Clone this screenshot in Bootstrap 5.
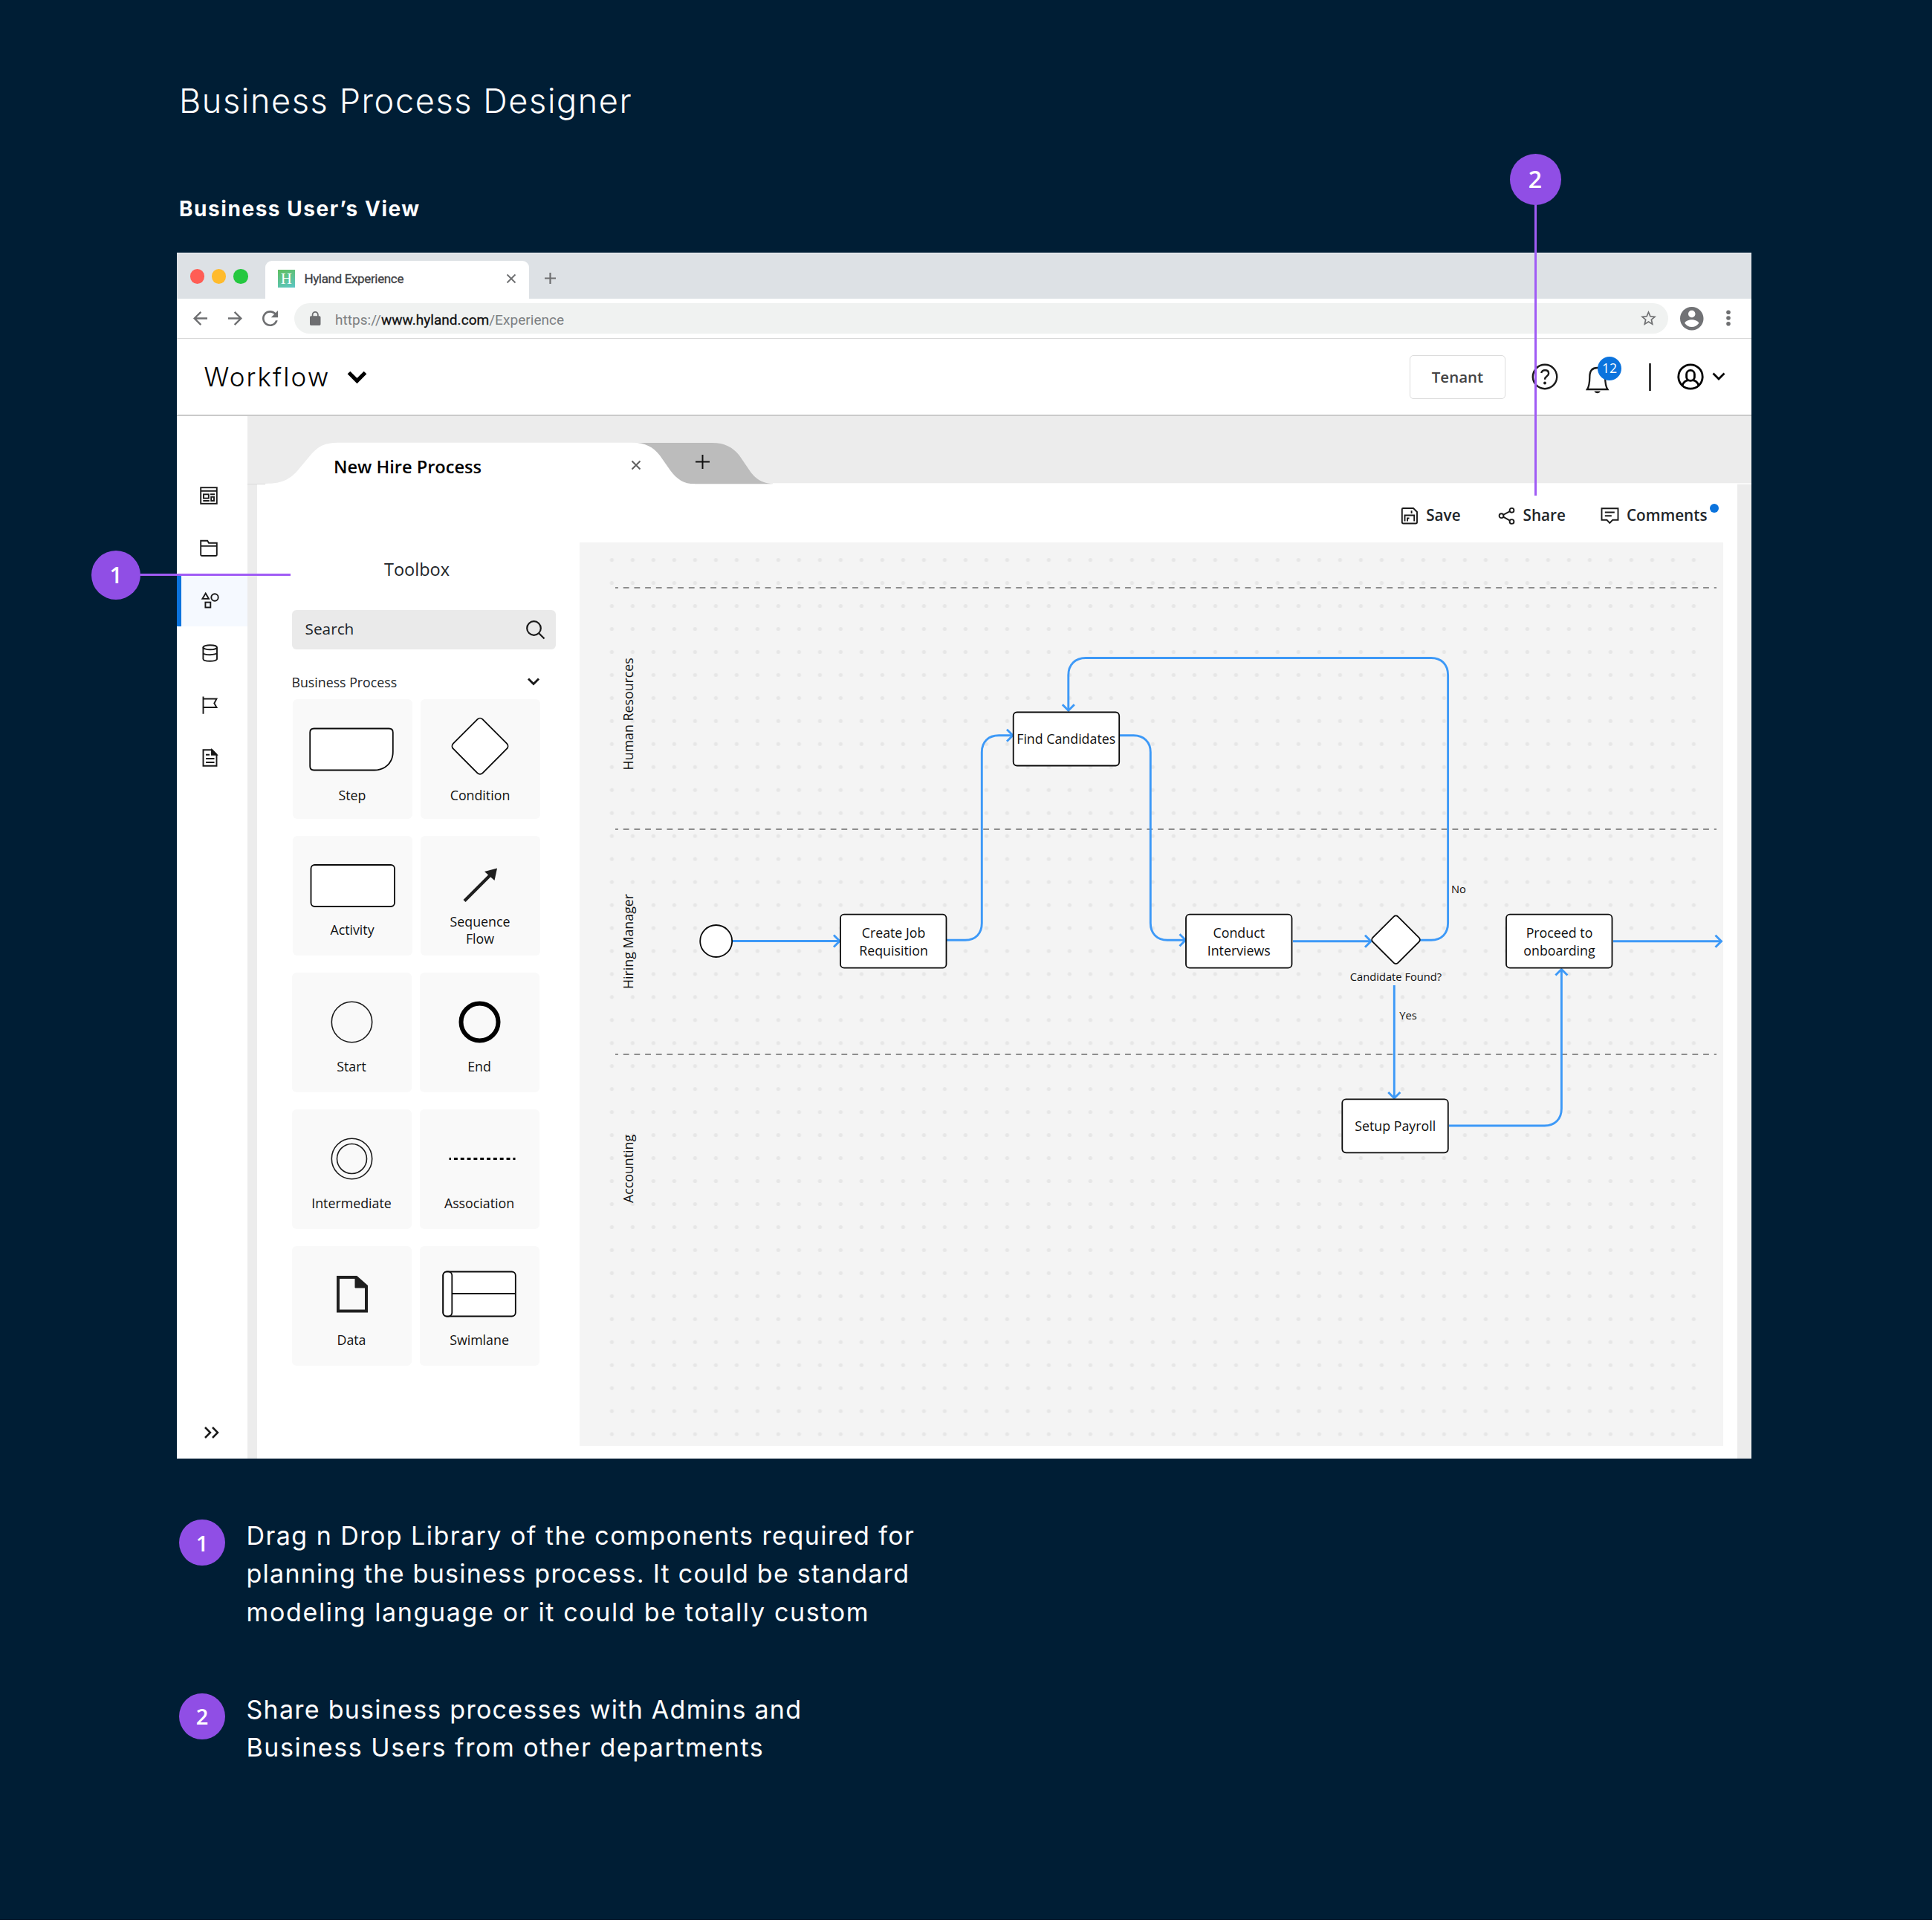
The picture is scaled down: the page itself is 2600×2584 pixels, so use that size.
<!DOCTYPE html>
<html lang="en">
<head>
<meta charset="utf-8">
<meta name="viewport" content="width=device-width, initial-scale=1">
<title>Business Process Designer</title>
<link href="https://cdn.jsdelivr.net/npm/bootstrap@5.3.0/dist/css/bootstrap.min.css" rel="stylesheet">
<style>
  body { background: #001e35; font-family: "Open Sans", sans-serif; color: #1a1a1a; }
  svg { display: block; flex: none; overflow: visible; }
  .board { width: 2600px; height: 2584px; padding: 106px 0 0 240px; border-bottom: 1px solid #000f22; overflow: hidden; }

  /* page headings and legend */
  .board-title { font: 300 45px/60px Inter, sans-serif; letter-spacing: 1.62px; margin: 0 0 95px 1px; }
  .board-subtitle { font: 700 28px/40px Inter, sans-serif; letter-spacing: 1.55px; margin: 0 0 38.5px 1px; }
  .pin { background: #904ee5; color: #fff; font-weight: 600; border-radius: 50%; display: flex; align-items: center; justify-content: center; flex: none; line-height: 1; }
  .pin-legend { width: 62px; height: 62px; font-size: 29px; margin: 4px 28.5px 0 1px; }
  .legend { padding-top: 78.5px; }
  .legend-row { margin-bottom: 80px; }
  .legend-text { font: 400 34px/51.3px Inter, sans-serif; margin: 0; }
  .legend-text span { display: block; }
  .t-1 { letter-spacing: 1.46px; } .t-2 { letter-spacing: 1.26px; } .t-3 { letter-spacing: 1.65px; } .t-4 { letter-spacing: 1.25px; } .t-5 { letter-spacing: 1.55px; }

  /* callouts over the window */
  .pin-a { left: 123px; top: 741px; width: 66px; height: 66px; font-size: 30px; }
  .pin-b { left: 2031.5px; top: 206.5px; width: 69px; height: 69px; font-size: 32px; }
  .wire { background: #a05cf5; }
  .wire-a { left: 188px; top: 771.5px; width: 202.5px; height: 3px; }
  .wire-b { left: 2064.6px; top: 274px; width: 3.4px; height: 393px; }

  /* browser frame */
  .browser { width: 2119.5px; height: 1623px; margin-left: -2.5px; background: #fff; }
  .tabstrip { height: 62.5px; background: #dde1e5; border-top: 1px solid #f1f2f5; padding-left: 18px; }
  .light { width: 19.5px; height: 19.5px; border-radius: 50%; margin: 21.5px 9.8px 0 0; }
  .browser-tab { width: 355px; height: 51px; background: #fff; border-radius: 9px 9px 0 0; padding: 0 18px 3px 17px; margin-left: 13.5px; font: 400 17px Roboto, sans-serif; letter-spacing: -.35px; color: #3f4144; -webkit-text-stroke: .3px; }
  .favicon { width: 23px; height: 24px; background: linear-gradient(160deg, #5fbf5f, #5cc6c6); color: #fff; font: 400 21px/24px "Liberation Serif", serif; text-align: center; letter-spacing: 0; margin-right: 12.5px; -webkit-text-stroke: 0; }
  .navstrip { height: 53.5px; border-bottom: 1.5px solid #d9d9d9; padding-left: 22px; color: #6e6f71; }
  .omnibox { width: 1849px; height: 41px; border-radius: 21px; background: #f0f2f1; padding: 0 16px 0 21px; font: 400 19px Roboto, sans-serif; letter-spacing: .04px; color: #7c7f82; }
  .omnibox b { font-weight: 400; color: #111; -webkit-text-stroke: .3px; }

  /* application header */
  .apphead { height: 104px; border-bottom: 2px solid #cacaca; padding: 1px 35.5px 0 37px; }
  .app-name { font: 300 35px/44px Inter, sans-serif; letter-spacing: 2.1px; color: #000; margin-right: 23px; }
  .btn-tenant { width: 129px; height: 59px; border: 1.5px solid #dcdcdc; border-radius: 5px; font-size: 20.5px; font-weight: 600; color: #444; padding: 0; }
  .count { left: 16px; top: -13px; width: 32px; height: 32px; background: #0b73dd; color: #fff; border-radius: 50%; font-size: 17.7px; line-height: 31px; text-align: center; }
  .vbar { width: 2.5px; height: 37px; background: #3a3a3a; }

  /* sidebar */
  .rail { width: 95px; padding: 73px 0 27px; background: #fff; }
  .rail-item { height: 69px; margin-bottom: 1.6px; padding-left: 31px; display: flex; align-items: center; }
  .rail-item.on { background: #f5f9ff; border-left: 6px solid #0b73dd; padding-left: 25px; }
  .work { background: #ececec; }

  /* document tabs and panel */
  .doctabs { height: 91px; }
  .doc-name { font-size: 23.6px; font-weight: 600; line-height: 30px; color: #000; margin: 53px 0 0 116.5px; width: 397px; }
  .panel { margin: 0 19.5px 0 13px; background: #fff; }
  .toolbox { width: 434px; padding: 100px 32px 0 47px; }
  .toolbox-title { font-size: 23.5px; line-height: 30px; margin: 0 0 40px 124.5px; font-weight: 400; }
  .searchbox { height: 53px; border-radius: 6px; background: #eaeaea; padding: 0 15px 0 18px; font-size: 20.8px; margin-bottom: 32px; }
  .group-head { font-size: 17.75px; line-height: 24px; margin-bottom: 11.5px; padding-right: 22px; }
  .tool-row { gap: 11px; margin-bottom: 23.5px; }
  .tool { width: 161px; height: 160.5px; border-radius: 6px; background: #f9f9f9; text-align: center; font-size: 17.8px; line-height: 24px; color: #111; flex: none; }
  .tool svg { height: 114px; width: 161px; }
  .tool svg.tall { height: 117px; }
  .tool svg.short { height: 103.5px; }
  .shift { margin-left: 1px; }
  .toolbar-row { height: 79px; padding: 7px 40px 0 0; font-size: 20.7px; font-weight: 600; }
  .dot { width: 12px; height: 12px; border-radius: 50%; background: #0b73dd; right: -15.5px; top: 0; }
  .ink { fill: none; stroke: #1a1a1a; stroke-width: 1.9; }

  /* diagram */
  .flow { fill: none; stroke: #3d99f7; stroke-width: 2.9; }
  .node { fill: #fff; stroke: #0a0a0a; stroke-width: 1.8; }
  .lane { stroke: #8d8d8d; stroke-width: 2; stroke-dasharray: 7.8 6.88; stroke-dashoffset: 3.9; }
  .diagram text { font-family: "Open Sans", sans-serif; font-size: 17.8px; fill: #0f0f0f; text-anchor: middle; }
  .diagram text.tiny { font-size: 14.7px; }
</style>
</head>
<body>
<main class="board position-relative text-white">
  <h1 class="board-title">Business Process Designer</h1>
  <h2 class="board-subtitle">Business User’s View</h2>

  <section class="browser d-flex flex-column text-dark">
    <div class="tabstrip d-flex">
      <span class="light" style="background:#ff5d55"></span>
      <span class="light" style="background:#ffbb2d"></span>
      <span class="light" style="background:#25c840"></span>
      <div class="browser-tab d-flex align-items-center align-self-end">
        <span class="favicon">H</span>
        <span>Hyland Experience</span>
        <svg class="ms-auto" width="12" height="12" fill="none" stroke="#6e6f71" stroke-width="1.8"><path d="M.5.5l11 11M11.5.5l-11 11"/></svg>
      </div>
      <svg style="margin:26.5px 0 0 21px" width="15" height="15" fill="none" stroke="#6e6f71" stroke-width="2.2"><path d="M7.5 0v15M0 7.5h15"/></svg>
    </div>

    <div class="navstrip d-flex align-items-center">
      <svg width="19" height="19" viewBox="4 4 16 16" fill="currentColor"><path d="M20 11H7.83l5.59-5.59L12 4l-8 8 8 8 1.41-1.41L7.83 13H20v-2z"/></svg>
      <svg style="margin-left:28px" width="19" height="19" viewBox="4 4 16 16" fill="currentColor"><path d="M12 4l-1.41 1.41L16.17 11H4v2h12.17l-5.58 5.59L12 20l8-8z"/></svg>
      <svg style="margin:0 22px 0 27px" width="21" height="21" viewBox="4 4 16 16" fill="currentColor"><path d="M17.65 6.35C16.2 4.9 14.21 4 12 4c-4.42 0-7.99 3.58-7.99 8s3.57 8 7.99 8c3.73 0 6.84-2.55 7.73-6h-2.08c-.82 2.33-3.04 4-5.65 4-3.31 0-6-2.69-6-6s2.69-6 6-6c1.66 0 3.14.69 4.22 1.78L13 11h7V4l-2.35 2.35z"/></svg>
      <div class="omnibox d-flex align-items-center">
        <svg style="margin-right:20px" width="14.5" height="19" viewBox="4 1 16 21" fill="#6e6f71"><path d="M18 8h-1V6c0-2.76-2.24-5-5-5S7 3.24 7 6v2H6c-1.1 0-2 .9-2 2v10c0 1.1.9 2 2 2h12c1.1 0 2-.9 2-2V10c0-1.1-.9-2-2-2zM8.9 6c0-1.71 1.39-3.1 3.1-3.1 1.71 0 3.1 1.39 3.1 3.1v2H8.9V6z"/></svg>
        <span class="pt-1">https://<b>www.hyland.com</b>/Experience</span>
        <svg class="ms-auto" width="21" height="20" viewBox="2 2 20 19" fill="#6e6f71"><path d="M22 9.24l-7.19-.62L12 2 9.19 8.63 2 9.24l5.46 4.73L5.82 21 12 17.27 18.18 21l-1.63-7.03L22 9.24zM12 15.4l-3.76 2.27 1-4.28-3.32-2.88 4.38-.38L12 6.1l1.71 4.04 4.38.38-3.32 2.88 1 4.28L12 15.4z"/></svg>
      </div>
      <svg style="margin:0 30.5px 0 16px" width="31.5" height="31.5" viewBox="2 2 20 20" fill="#717275"><path d="M12 2C6.48 2 2 6.48 2 12s4.48 10 10 10 10-4.48 10-10S17.52 2 12 2zm0 3c1.66 0 3 1.34 3 3s-1.34 3-3 3-3-1.34-3-3 1.34-3 3-3zm0 14.2c-2.5 0-4.71-1.28-6-3.22.03-1.99 4-3.08 6-3.08 1.99 0 5.97 1.09 6 3.08-1.29 1.94-3.5 3.22-6 3.22z"/></svg>
      <svg width="6" height="22" fill="#6e6f71"><circle cx="3" cy="3.3" r="2.8"/><circle cx="3" cy="11" r="2.8"/><circle cx="3" cy="18.7" r="2.8"/></svg>
    </div>

    <header class="apphead d-flex align-items-center">
      <span class="app-name">Workflow</span>
      <svg width="27" height="17" fill="none" stroke="#000" stroke-width="5.2"><path d="M2.5 2.5l11 11 11-11"/></svg>
      <button class="btn btn-tenant ms-auto">Tenant</button>
      <svg class="ink" style="margin-left:35px;stroke-width:2.4" width="36" height="36"><circle cx="18" cy="18" r="16.2"/><path d="M13.2 13c.6-2.6 2.3-3.8 4.9-3.8 3 0 5 1.6 5 4.2 0 2-1 3-2.6 4.1-1.6 1.1-2.4 1.9-2.4 4.3"/><circle cx="18" cy="26.5" r="1.9" fill="#1a1a1a" stroke="none"/></svg>
      <div class="position-relative" style="margin:8px 53px 0 37px">
        <svg class="ink" style="stroke-width:2.3" width="32" height="37"><path d="M2 31C5.3 26 5.3 20 5.3 14 5.3 6 9 2 15.6 2s10.500 4 10.500 12c0 6 0 12 3.300 17z"/><path d="M11.500 33.500h8.300c-.8 2-2.300 2.700-4.200 2.700s-3.400-.7-4.100-2.700z" fill="#1a1a1a" stroke="none"/></svg>
        <span class="count position-absolute">12</span>
      </div>
      <span class="vbar"></span>
      <svg style="margin:0 11px 0 35px" width="36" height="36" fill="none" stroke="#000" stroke-width="2.8"><circle cx="18" cy="18" r="16.2"/><rect x="12.600" y="9.400" width="10.800" height="14" rx="5.200"/><path d="M7 29.500c1.500-4 4-6.200 7.500-6.700M29 29.500c-1.500-4-4-6.200-7.500-6.700"/></svg>
      <svg style="margin-bottom:2px" width="18" height="11" fill="none" stroke="#000" stroke-width="2.8"><path d="M1.5 1.5L9 9l7.5-7.5"/></svg>
    </header>

    <div class="d-flex flex-grow-1">
      <nav class="rail d-flex flex-column">
        <a class="rail-item"><svg class="ink" width="24" height="24"><rect x="1.200" y="1.200" width="21.600" height="21.600"/><path d="M1 5.800h22M14 10.300h6M4.300 19h8.500"/><rect x="5" y="10.300" width="6.800" height="5.300"/><rect x="15.200" y="13.800" width="3.800" height="5.200"/></svg></a>
        <a class="rail-item"><svg class="ink" width="24" height="24"><path d="M1.200 1.800h9l1.800 3h10.800v15.400q0 1.800-1.800 1.800H3q-1.800 0-1.800-1.800zM1.200 8.900h21.600"/></svg></a>
        <a class="rail-item on"><svg class="ink" width="26" height="24"><path d="M7.700 2.600L12 9.900H3.400z"/><circle cx="20" cy="8" r="4.700"/><rect x="7.400" y="14.600" width="6.900" height="6.900"/></svg></a>
        <a class="rail-item"><svg class="ink" width="24" height="24"><ellipse cx="13.700" cy="4.200" rx="9.300" ry="3"/><path d="M4.400 4.200v15.600c0 4 18.600 4 18.600 0V4.200M4.400 11.200c0 4 18.600 4 18.600 0"/></svg></a>
        <a class="rail-item"><svg class="ink" width="24" height="24"><path d="M4.500.5v23.300M4.500 3.500h18l-3.200 6 3.200 5.500h-18"/></svg></a>
        <a class="rail-item"><svg class="ink" width="24" height="24"><path d="M4.500 1.300h12l6 6v15.400h-18zM8 7.800h5M8 13h11.500M8 18h11.500"/><path d="M16 1.300v6.500h6.500z" fill="#1a1a1a"/></svg></a>
        <a class="mt-auto" style="padding-left:37px"><svg class="ink" style="stroke-width:2.5" width="20" height="16"><path d="M1 1l7 7-7 7M11 1l7 7-7 7"/></svg></a>
      </nav>

      <div class="work flex-grow-1 d-flex flex-column">
        <div class="doctabs d-flex position-relative">
          <svg class="position-absolute top-0 start-0" width="2024" height="93" viewBox="333 560 2024 93">
            <path d="M333 651.500h45" stroke="#dadada" fill="none"/>
            <path d="M850 596h108c18 0 28 6 37 17l15 22c9 12 18 15.300 31 16.300H925L850 640z" fill="#bcbcbc"/>
            <path d="M357 651c20 0 30-4 41.600-15.400L420 610c9-9.500 18-14.300 34-14.300h397c18 0 28 6 37 17.300l14 20c9 12 18 18.300 33 18.300V653H357z" fill="#fff"/>
            <path d="M1040 651h1317" stroke="#fff" stroke-width="1.5"/>
          </svg>
          <span class="doc-name position-relative">New Hire Process</span>
          <svg class="position-relative" style="margin-top:60.5px;margin-left:3.5px" width="12" height="12" fill="none" stroke="#5d5d5d" stroke-width="1.9"><path d="M.5.5l11 11M11.500.5l-11 11"/></svg>
          <svg class="position-relative" style="margin:52px 0 0 74.5px" width="19" height="19" fill="none" stroke="#111" stroke-width="2"><path d="M9.500 0v19M0 9.500h19"/></svg>
        </div>

        <div class="panel d-flex flex-grow-1">
          <aside class="toolbox">
            <h3 class="toolbox-title">Toolbox</h3>
            <div class="searchbox d-flex align-items-center justify-content-between">
              <span>Search</span>
              <svg class="ink" style="stroke-width:2.2" width="25" height="25"><circle cx="10.500" cy="10.500" r="9.300"/><path d="M17.200 17.200l7.300 7.300"/></svg>
            </div>
            <div class="group-head d-flex align-items-center justify-content-between">
              <span>Business Process</span>
              <svg class="ink" style="stroke-width:2.9;margin-bottom:2px" width="16" height="10"><path d="M1 1.500L8 8.500l7-7"/></svg>
            </div>
            <div class="tool-row d-flex shift">
              <div class="tool"><svg class="tall"><path class="node" d="M28.500 39.500h101q5.300 0 5.300 5.300v26c0 16-12 24.700-25 24.700H28.500q-5.300 0-5.300-5.300V44.800q0-5.300 5.300-5.300z"/></svg>Step</div>
              <div class="tool"><svg class="tall"><rect class="node" x="52" y="35.200" width="56" height="56" rx="5" transform="rotate(45 80 63.200)"/></svg>Condition</div>
            </div>
            <div class="tool-row d-flex shift">
              <div class="tool"><svg><rect class="node" x="24.500" y="39" width="112.500" height="56" rx="5"/></svg>Activity</div>
              <div class="tool" style="line-height:23.5px"><svg class="short"><path d="M59 87.500L95 51.500" stroke="#1f1f1f" stroke-width="4.200"/><path d="M103 43.500L99.500 60 86 48z" fill="#1f1f1f"/></svg>Sequence<br>Flow</div>
            </div>
            <div class="tool-row d-flex">
              <div class="tool"><svg><circle class="ink" cx="80.500" cy="66.500" r="27.200" style="stroke-width:1.6"/></svg>Start</div>
              <div class="tool"><svg><circle class="ink" cx="80.500" cy="66.500" r="25" style="stroke:#000;stroke-width:6"/></svg>End</div>
            </div>
            <div class="tool-row d-flex">
              <div class="tool"><svg><g class="ink" style="stroke-width:1.6"><circle cx="80.500" cy="66.500" r="27.200"/><circle cx="80.500" cy="66.500" r="20"/></g></svg>Intermediate</div>
              <div class="tool"><svg><path d="M39.500 66.500h89" stroke="#000" stroke-width="3" stroke-dasharray="4.900 3.930" stroke-dashoffset="2.400"/></svg>Association</div>
            </div>
            <div class="tool-row d-flex">
              <div class="tool"><svg><path d="M62 42h24.500L100 54V87.500H62z" fill="none" stroke="#1f1f1f" stroke-width="4"/><path d="M85 41v15h16z" fill="#1f1f1f" stroke="#1f1f1f"/></svg>Data</div>
              <div class="tool"><svg><rect class="node" x="31.300" y="34.500" width="97.500" height="60" rx="5"/><rect class="node" x="31.300" y="34.500" width="12" height="60" rx="5"/><path class="node" d="M43.300 64h85.500"/></svg>Swimlane</div>
            </div>
          </aside>

          <div class="flex-grow-1">
            <div class="toolbar-row d-flex align-items-center justify-content-end">
              <svg class="ink" width="24" height="24" style="margin-right:10px"><path d="M3.200 2H17l5 5v13.800q0 1.700-1.700 1.700H3.500q-1.700 0-1.700-1.700V3.500Q1.800 2 3.200 2zM5.500 19.500v-8h12.700v8M9 19.500v-4h2.500M14.600 5.300V9"/></svg>
              <span>Save</span>
              <svg class="ink" width="24" height="24" style="margin:0 10px 0 50px"><circle cx="4.500" cy="12.200" r="2.900"/><circle cx="18.500" cy="4.800" r="2.900"/><circle cx="18.500" cy="20" r="2.900"/><path d="M7.100 10.800l8.800-4.600M7.100 13.600l8.800 5"/></svg>
              <span>Share</span>
              <svg class="ink" width="24" height="24" style="margin:0 11px 0 47px"><path d="M1.500 2.300h22v15.500h-7.300l-3.900 4-3.900-4H1.500zM5.800 7.500h13M5.800 12.200h9"/></svg>
              <span class="position-relative">Comments<i class="dot position-absolute"></i></span>
            </div>

            <svg class="diagram" width="1539" height="1216" viewBox="780 730 1539 1216">
              <defs>
                <pattern id="grid" x="809.400" y="738.100" width="28" height="30.960" patternUnits="userSpaceOnUse"><circle cx="14" cy="15.500" r="2.600" fill="#e6e6e6"/></pattern>
                <marker id="tip" viewBox="0 0 12 20" refX="10" refY="10" markerWidth="12" markerHeight="20" markerUnits="userSpaceOnUse" orient="auto"><path d="M2 2l8 8-8 8" fill="none" stroke="#3d99f7" stroke-width="2.900"/></marker>
              </defs>
              <rect x="780" y="730" width="1539" height="1216" fill="#f4f4f4"/>
              <rect x="809.400" y="738.100" width="1484" height="1207" fill="url(#grid)"/>
              <path class="lane" d="M828 791h1482"/><path class="lane" d="M828 1116h1482"/><path class="lane" d="M828 1419h1482"/>

              <text transform="translate(852 960.800) rotate(-90)">Human Resources</text>
              <text transform="translate(852 1267) rotate(-90)">Hiring Manager</text>
              <text transform="translate(852 1573) rotate(-90)">Accounting</text>

              <g class="flow">
                <path marker-end="url(#tip)" d="M986 1266.500h144"/>
                <path marker-end="url(#tip)" d="M1274 1265.200h25c14 0 22.300-9 22.300-23v-230c0-14 9-22.400 23-22.400H1363"/>
                <path marker-end="url(#tip)" d="M1506.500 989.800h19c14 0 22.800 9 22.800 22.400v230c0 14 8.700 23 22.700 23h24.500"/>
                <path marker-end="url(#tip)" d="M1740 1266.800h105"/>
                <path marker-end="url(#tip)" d="M1911 1265.200h15c14 0 22.600-9 22.600-23V908.500c0-14-8.600-23-22.600-23H1461c-14 0-23.200 9-23.200 23v47.700"/>
                <path marker-end="url(#tip)" d="M1876.300 1326v152"/>
                <path marker-end="url(#tip)" d="M1950 1515h128.500c14 0 22.900-9 22.900-23V1304.500"/>
                <path marker-end="url(#tip)" d="M2171 1266.800h145.500"/>
              </g>

              <circle class="node" cx="963.700" cy="1266.500" r="21.500"/>
              <rect class="node" x="1131" y="1230.700" width="142.500" height="72" rx="5"/>
              <rect class="node" x="1363.700" y="958.500" width="142.500" height="72" rx="5"/>
              <rect class="node" x="1596" y="1230.700" width="142.500" height="72" rx="5"/>
              <rect class="node" x="2027" y="1230.700" width="142.500" height="72" rx="5"/>
              <rect class="node" x="1806.300" y="1479.300" width="142.500" height="72" rx="5"/>
              <rect class="node" x="1854.500" y="1240.800" width="48" height="48" rx="4" transform="rotate(45 1878.500 1264.800)"/>

              <text x="1202.500" y="1261.700">Create Job</text><text x="1202.500" y="1286.200">Requisition</text>
              <text x="1434.700" y="1001.300">Find Candidates</text>
              <text x="1667.300" y="1261.700">Conduct</text><text x="1667.300" y="1286.200">Interviews</text>
              <text x="2098.500" y="1261.700">Proceed to</text><text x="2098.500" y="1286.200">onboarding</text>
              <text x="1877.700" y="1521.800">Setup Payroll</text>
              <text class="tiny" x="1878.500" y="1320">Candidate Found?</text>
              <text class="tiny" x="1895" y="1372.300">Yes</text>
              <text class="tiny" x="1963" y="1201.500">No</text>
            </svg>
          </div>
        </div>
      </div>
    </div>
  </section>

  <section class="legend">
    <div class="legend-row d-flex">
      <span class="pin pin-legend">1</span>
      <p class="legend-text"><span class="t-1">Drag n Drop Library of the components required for</span><span class="t-2">planning the business process. It could be standard</span><span class="t-3">modeling language or it could be totally custom</span></p>
    </div>
    <div class="legend-row d-flex">
      <span class="pin pin-legend">2</span>
      <p class="legend-text"><span class="t-4">Share business processes with Admins and</span><span class="t-5">Business Users from other departments</span></p>
    </div>
  </section>

  <i class="wire wire-a position-absolute"></i>
  <span class="pin pin-a position-absolute">1</span>
  <i class="wire wire-b position-absolute"></i>
  <span class="pin pin-b position-absolute">2</span>
</main>
<script src="https://cdn.jsdelivr.net/npm/bootstrap@5.3.0/dist/js/bootstrap.bundle.min.js"></script>
</body>
</html>
